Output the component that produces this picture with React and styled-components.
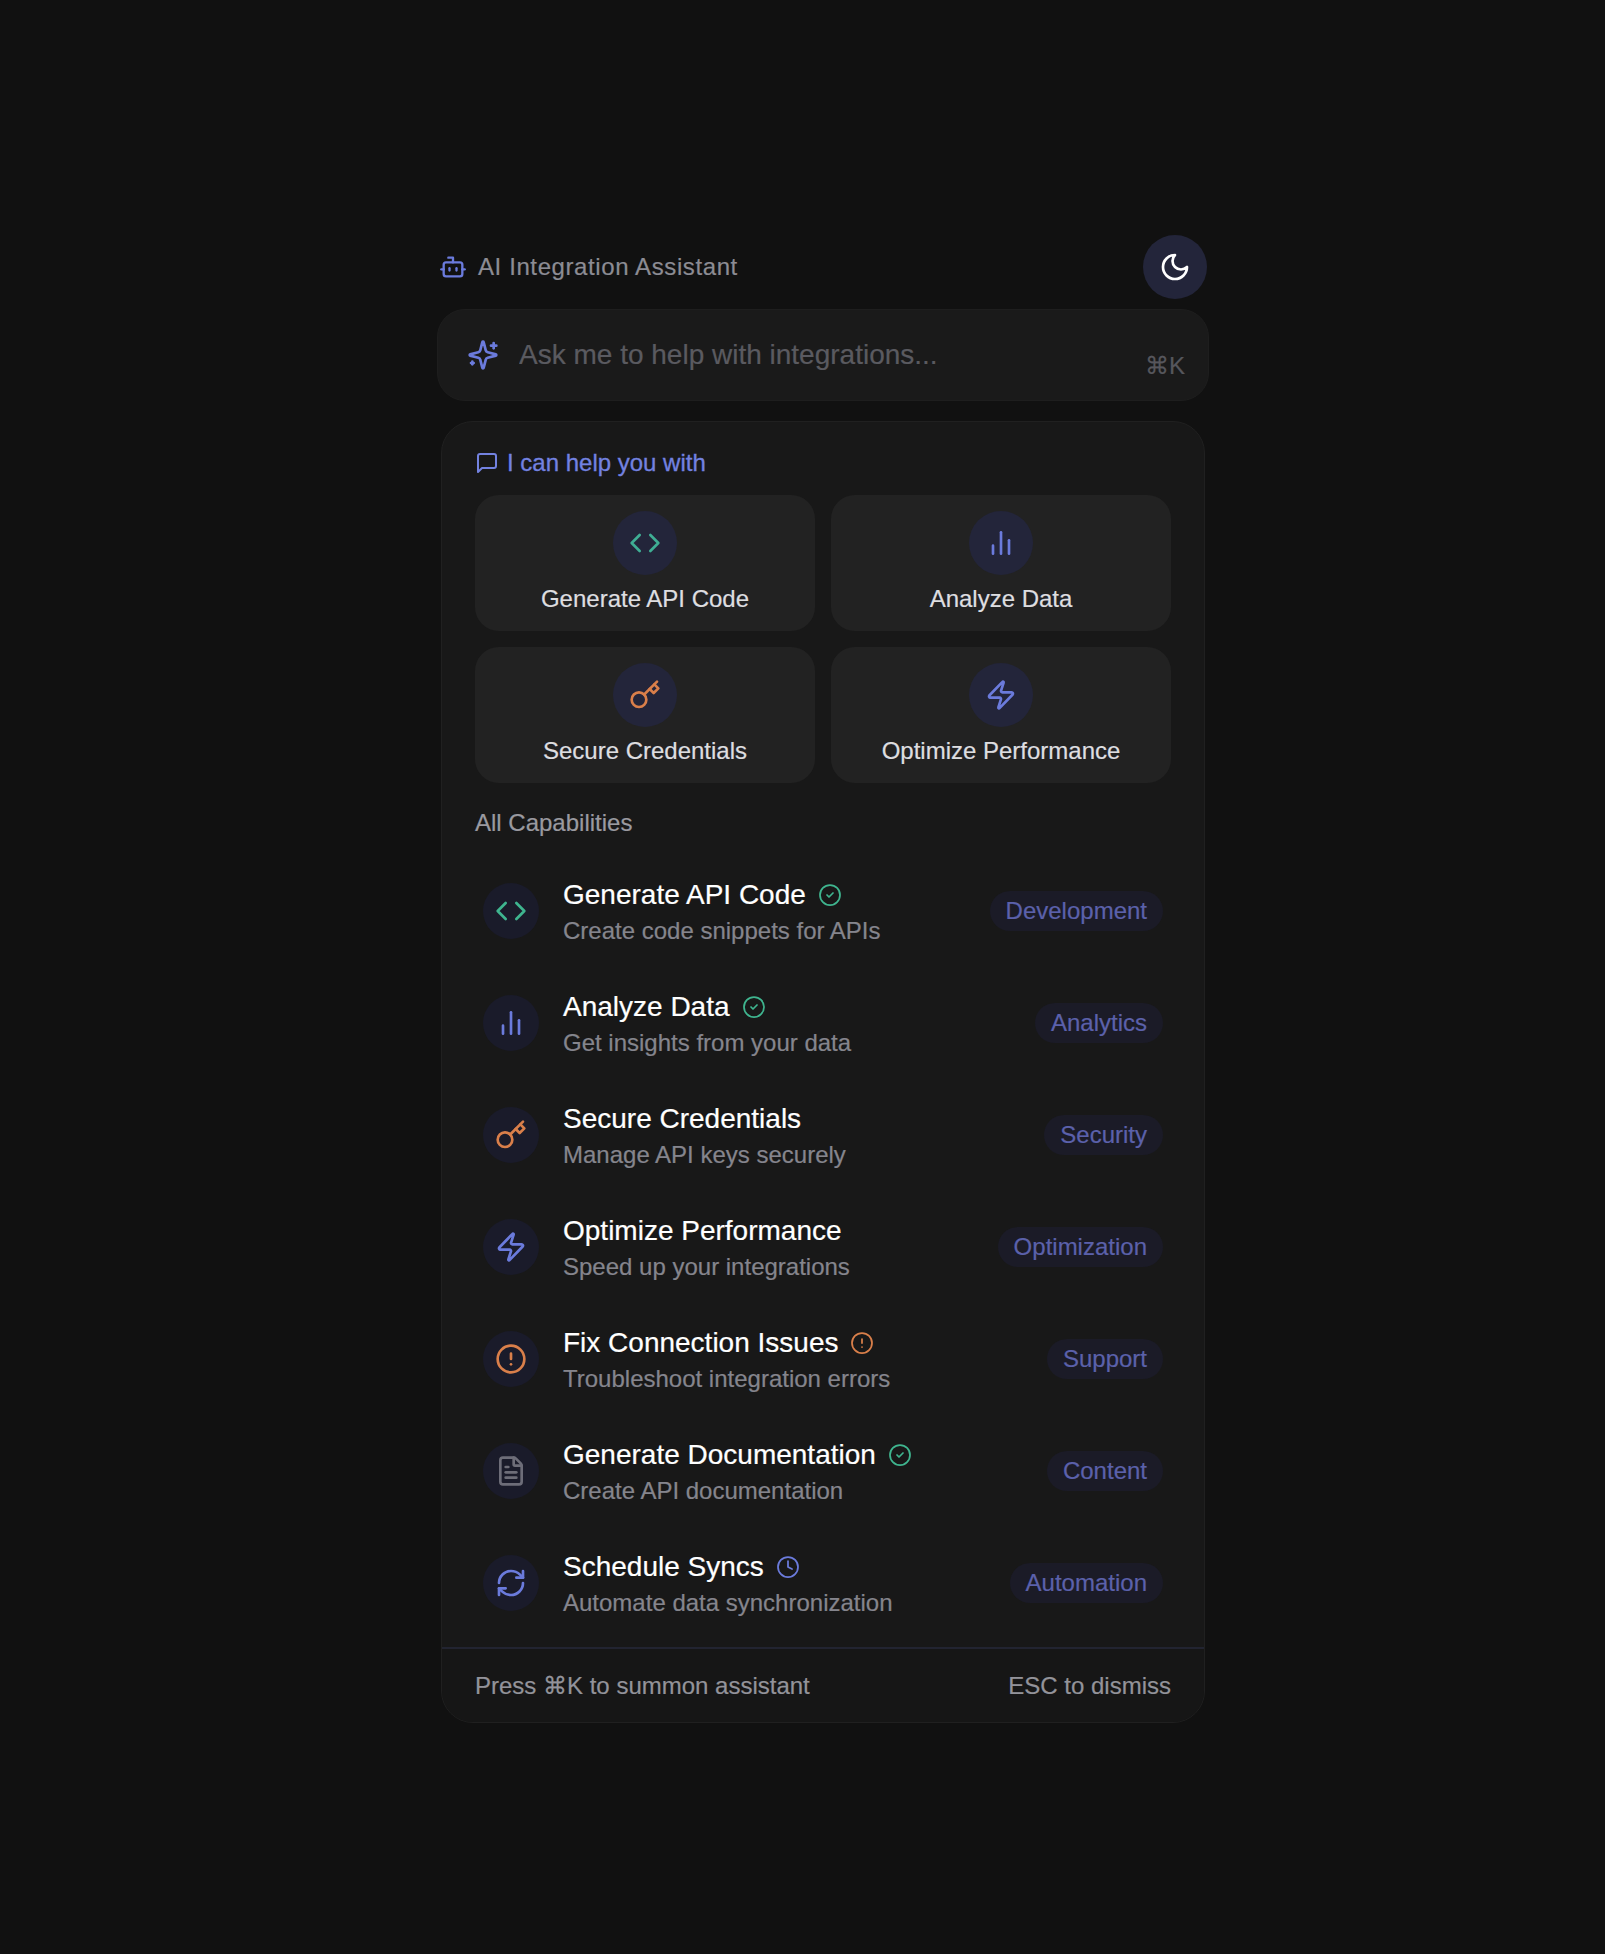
import * as React from 'react';
import styled, { createGlobalStyle } from 'styled-components';
import {
  Bot,
  CircleAlert,
  CircleCheck,
  Clock,
  Code,
  FileText,
  RefreshCw,
  Zap,
} from 'lucide-react';

const GREEN = '#3fb58f';
const INDIGO = '#6b7bdc';
const ORANGE = '#d97f4a';
const GRAY = '#6d6d78';

const GlobalStyle = createGlobalStyle`
  html, body {
    margin: 0;
    background: #111111;
    font-family: "Liberation Sans", Arial, sans-serif;
  }
  * { box-sizing: border-box; }
`;

// older lucide shapes, the current package redraws these
const Glyph = ({ size = 24, children }) => (
  <svg
    width={size}
    height={size}
    viewBox="0 0 24 24"
    fill="none"
    stroke="currentColor"
    strokeWidth="2"
    strokeLinecap="round"
    strokeLinejoin="round"
  >
    {children}
  </svg>
);

const BarsIcon = ({ size }) => (
  <Glyph size={size}>
    <path d="M18 20V10" />
    <path d="M12 20V4" />
    <path d="M6 20v-6" />
  </Glyph>
);

const KeyIcon = ({ size }) => (
  <Glyph size={size}>
    <circle cx="7.5" cy="15.5" r="5.5" />
    <path d="m21 2-9.6 9.6" />
    <path d="m15.5 7.5 3 3L22 7l-3-3" />
  </Glyph>
);

const SparklesIcon = ({ size }) => (
  <Glyph size={size}>
    <path d="M9.937 15.5A2 2 0 0 0 8.5 14.063l-6.135-1.582a.5.5 0 0 1 0-.962L8.5 9.936A2 2 0 0 0 9.937 8.5l1.582-6.135a.5.5 0 0 1 .963 0L14.063 8.5A2 2 0 0 0 15.5 9.937l6.135 1.581a.5.5 0 0 1 0 .964L15.5 14.063a2 2 0 0 0-1.437 1.437l-1.582 6.135a.5.5 0 0 1-.963 0z" />
    <path d="M20 3v4" />
    <path d="M22 5h-4" />
    <path d="M4 17v2" />
    <path d="M5 18H3" />
  </Glyph>
);

const MessageIcon = ({ size }) => (
  <Glyph size={size}>
    <path d="M21 15a2 2 0 0 1-2 2H7l-4 4V5a2 2 0 0 1 2-2h14a2 2 0 0 1 2 2z" />
  </Glyph>
);

const MoonIcon = ({ size }) => (
  <Glyph size={size}>
    <path d="M12 3a6 6 0 0 0 9 9 9 9 0 1 1-9-9Z" />
  </Glyph>
);

const Page = styled.div`
  min-height: 1954px;
  padding: 235px 0 0 437px;
  -webkit-text-stroke: 0.2px;
`;

const Column = styled.div`
  width: 772px;
`;

const Header = styled.div`
  display: flex;
  align-items: center;
  justify-content: space-between;
  height: 64px;
  padding: 0 2px;
`;

const HeaderTitle = styled.div`
  display: flex;
  align-items: center;
  gap: 11px;
  font-size: 24px;
  letter-spacing: 0.6px;
  color: #8c8c94;
  svg { color: ${INDIGO}; }
`;

const ThemeButton = styled.button`
  display: flex;
  align-items: center;
  justify-content: center;
  width: 64px;
  height: 64px;
  padding: 0;
  border: 0;
  border-radius: 50%;
  background: #23253a;
  color: #ffffff;
`;

const SearchBar = styled.div`
  position: relative;
  display: flex;
  align-items: center;
  gap: 20px;
  height: 92px;
  margin-top: 10px;
  padding: 0 32px 0 29px;
  border: 1px solid #1e1e1e;
  border-radius: 28px;
  background: #1a1a1a;
  svg { flex: none; color: ${INDIGO}; }
`;

const SearchInput = styled.input`
  flex: 1;
  min-width: 0;
  padding: 0;
  border: 0;
  outline: 0;
  background: transparent;
  font: 28px "Liberation Sans", Arial, sans-serif;
  color: #ffffff;
  &::placeholder { color: #5a5a60; opacity: 1; }
`;

const Shortcut = styled.span`
  position: absolute;
  right: 23px;
  top: 42px;
  font-size: 24px;
  line-height: 28px;
  color: #56565c;
`;

const Panel = styled.div`
  margin: 20px 4px 0;
  border: 1px solid #202020;
  border-radius: 32px;
  background: #181818;
  overflow: hidden;
`;

const Section = styled.div`
  padding: 27px 33px 0;
`;

const SectionHead = styled.div`
  display: flex;
  align-items: center;
  gap: 8px;
  height: 28px;
  margin-bottom: 18px;
  font-size: 24px;
  color: #7382e0;
  -webkit-text-stroke: 0.3px #7382e0;
`;

const CardGrid = styled.div`
  display: grid;
  grid-template-columns: 1fr 1fr;
  gap: 16px;
`;

const Card = styled.div`
  display: flex;
  flex-direction: column;
  align-items: center;
  gap: 9px;
  height: 136px;
  padding-top: 16px;
  border-radius: 24px;
  background: #222222;
`;

const IconCircle = styled.div`
  display: flex;
  align-items: center;
  justify-content: center;
  flex: none;
  width: ${(p) => p.size}px;
  height: ${(p) => p.size}px;
  border-radius: 50%;
  background: ${(p) => p.bg};
  color: ${(p) => p.color};
`;

const CardLabel = styled.div`
  font-size: 24px;
  line-height: 30px;
  color: #dedee0;
`;

const AllLabel = styled.div`
  margin-top: 26px;
  font-size: 24px;
  line-height: 28px;
  color: #9a9aa0;
`;

const List = styled.div`
  margin: 18px 0 8px;
`;

const Row = styled.div`
  display: flex;
  align-items: center;
  gap: 24px;
  height: 112px;
  padding: 0 8px;
`;

const RowText = styled.div`
  flex: 1;
  min-width: 0;
  padding-top: 3px;
`;

const RowTitle = styled.div`
  display: flex;
  align-items: center;
  gap: 12px;
  font-size: 28px;
  line-height: 34px;
  color: #ffffff;
  margin-bottom: 3px;
`;

const StatusIcon = styled.span`
  display: flex;
  color: ${(p) => p.color};
`;

const RowDesc = styled.div`
  font-size: 24px;
  line-height: 32px;
  color: #85858d;
`;

const Badge = styled.span`
  flex: none;
  height: 40px;
  padding: 0 16px;
  border-radius: 20px;
  background: #1b1b27;
  font-size: 24px;
  line-height: 40px;
  color: #5b61ab;
`;

const Footer = styled.div`
  display: flex;
  align-items: center;
  justify-content: space-between;
  height: 75px;
  padding: 0 33px;
  border-top: 2px solid #222431;
  background: #161616;
  font-size: 24px;
  color: #93939a;
`;

const quickActions = [
  { label: 'Generate API Code', Icon: Code, color: '#3fae94' },
  { label: 'Analyze Data', Icon: BarsIcon, color: INDIGO },
  { label: 'Secure Credentials', Icon: KeyIcon, color: ORANGE },
  { label: 'Optimize Performance', Icon: Zap, color: INDIGO },
];

const capabilities = [
  { title: 'Generate API Code', desc: 'Create code snippets for APIs', tag: 'Development', Icon: Code, color: GREEN, Status: CircleCheck, statusColor: GREEN },
  { title: 'Analyze Data', desc: 'Get insights from your data', tag: 'Analytics', Icon: BarsIcon, color: INDIGO, Status: CircleCheck, statusColor: GREEN },
  { title: 'Secure Credentials', desc: 'Manage API keys securely', tag: 'Security', Icon: KeyIcon, color: ORANGE },
  { title: 'Optimize Performance', desc: 'Speed up your integrations', tag: 'Optimization', Icon: Zap, color: INDIGO },
  { title: 'Fix Connection Issues', desc: 'Troubleshoot integration errors', tag: 'Support', Icon: CircleAlert, color: ORANGE, Status: CircleAlert, statusColor: ORANGE },
  { title: 'Generate Documentation', desc: 'Create API documentation', tag: 'Content', Icon: FileText, color: GRAY, Status: CircleCheck, statusColor: GREEN },
  { title: 'Schedule Syncs', desc: 'Automate data synchronization', tag: 'Automation', Icon: RefreshCw, color: INDIGO, Status: Clock, statusColor: INDIGO },
];

export default function App() {
  return (
    <Page>
      <GlobalStyle />
      <Column>
        <Header>
          <HeaderTitle>
            <Bot size={28} strokeWidth={2} />
            AI Integration Assistant
          </HeaderTitle>
          <ThemeButton>
            <MoonIcon size={32} />
          </ThemeButton>
        </Header>
        <SearchBar>
          <SparklesIcon size={32} />
          <SearchInput placeholder="Ask me to help with integrations..." />
          <Shortcut>⌘K</Shortcut>
        </SearchBar>
        <Panel>
          <Section>
            <SectionHead>
              <MessageIcon size={24} />
              I can help you with
            </SectionHead>
            <CardGrid>
              {quickActions.map(({ label, Icon, color }) => (
                <Card key={label}>
                  <IconCircle size={64} bg="#23253a" color={color}>
                    <Icon size={32} />
                  </IconCircle>
                  <CardLabel>{label}</CardLabel>
                </Card>
              ))}
            </CardGrid>
            <AllLabel>All Capabilities</AllLabel>
            <List>
              {capabilities.map(({ title, desc, tag, Icon, color, Status, statusColor }) => (
                <Row key={title}>
                  <IconCircle size={56} bg="#1a1b2a" color={color}>
                    <Icon size={32} />
                  </IconCircle>
                  <RowText>
                    <RowTitle>
                      {title}
                      {Status && (
                        <StatusIcon color={statusColor}>
                          <Status size={24} strokeWidth={1.75} />
                        </StatusIcon>
                      )}
                    </RowTitle>
                    <RowDesc>{desc}</RowDesc>
                  </RowText>
                  <Badge>{tag}</Badge>
                </Row>
              ))}
            </List>
          </Section>
          <Footer>
            <span>Press ⌘K to summon assistant</span>
            <span>ESC to dismiss</span>
          </Footer>
        </Panel>
      </Column>
    </Page>
  );
}
